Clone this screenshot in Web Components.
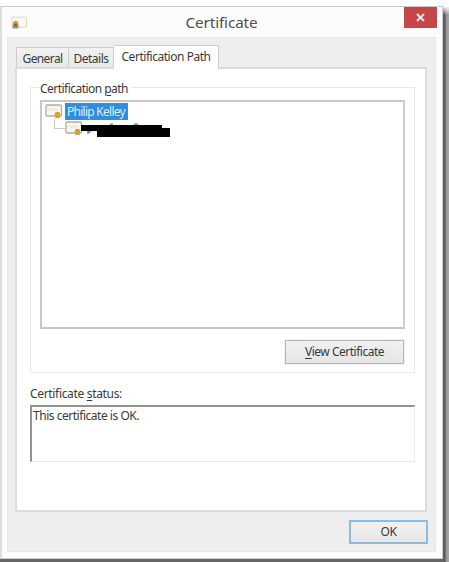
<!DOCTYPE html>
<html lang="en"><head><meta charset="utf-8"><title>Certificate</title>
<style>
html,body{margin:0;height:100%;background:#fff;overflow:hidden}
body{font:12px/16px "Noto Sans","Open Sans",sans-serif;color:#3a3a3a}
</style></head><body>
<cert-dialog></cert-dialog>
<script>
const define=(name,html,ready)=>customElements.define(name,class extends HTMLElement{
  constructor(){super();this.attachShadow({mode:'open'}).innerHTML=html;}
  connectedCallback(){if(ready)ready(this);}
});

// Label whose tracking is adjusted so that it spans the width in its "w" attribute.
define('ui-label',`<style>:host{display:inline-block;white-space:nowrap}span{display:inline-block}::slotted(u){text-underline-offset:2px;text-decoration-thickness:1px}</style><span><slot></slot></span>`,el=>{
  const w=+el.getAttribute('w'),s=el.shadowRoot.querySelector('span'),n=el.textContent.length;
  el.style.width=w+'px';
  s.style.letterSpacing=((w-s.getBoundingClientRect().width)/n)+'px';
});

define('cert-icon',`<style>:host{display:block;width:18px;height:15px}svg{display:block}</style>
<svg width="18" height="15" viewBox="0 0 18 15"><rect x="1" y="1" width="15.5" height="11" rx="1" fill="#f7f5f0" stroke="#b9ad94" stroke-width="1.3"/><path d="M4 4.5l3 2 2-1.5 4 1" fill="none" stroke="#ddd9d3"/><path d="M10.5 11v3.5l2-1 2 1V11" fill="#8d8590"/><circle cx="12.5" cy="10.5" r="2.8" fill="#dba520"/></svg>`);

define('title-icon',`<style>:host{display:block;width:17px;height:14px}svg{display:block}</style>
<svg width="17" height="14" viewBox="0 0 17 14"><rect x="1" y="1.2" width="14.5" height="10" rx="1" fill="#fbf9f5" stroke="#e5dcae"/><path d="M1.5 9h6v3.5h-6z" fill="#8a91a8"/><path d="M1.5 9.8l.9-4 2.2-1.2 2.2 1.2.9 4z" fill="#d9a116"/><circle cx="4.6" cy="9" r="1.6" fill="#876330"/></svg>`);

define('ui-button',`<style>:host{display:flex;align-items:center;justify-content:center;box-sizing:border-box;height:24px;border:1px solid #b5b5b5;background:linear-gradient(#f1f1f1,#e5e5e5);box-shadow:0 0 1px #aaa}
:host([primary]){border:2px solid #8dbbe6;box-shadow:none;background:linear-gradient(#f0f0f0,#e7e7e7)}</style><slot></slot>`);

define('close-button',`<style>:host{display:grid;place-items:center;width:33px;height:21px;background:#c84648}svg{display:block}</style>
<svg width="9" height="9" viewBox="0 0 9 9"><path d="M1 1l7 7M8 1L1 8" stroke="#f8e6e6" stroke-width="2"/></svg>`);

define('title-bar',`<style>:host{display:grid;grid-template-columns:33px 1fr 33px;height:30px;padding:0 5px 0 9px;color:#505050;font-size:15.3px;line-height:20px}
title-icon{margin-top:9px}ui-label{justify-self:center;margin:5px 5px 0 0}</style>
<title-icon></title-icon><ui-label w="72">Certificate</ui-label><close-button></close-button>`);

define('ui-tab',`<style>:host{display:flex;align-items:center;justify-content:center;box-sizing:border-box;height:20px;border:1px solid #cdcdcd;border-width:1px 1px 0 0;background:linear-gradient(#f1f1f1,#e9e9e9);padding-top:2px}
:host([first]){border-left-width:1px}
:host([active]){height:24px;background:#fff;margin-bottom:-2px;padding-bottom:2px;padding-top:0;position:relative;z-index:1}</style><slot></slot>`);

define('tab-strip',`<style>:host{display:flex;align-items:flex-end;height:22px;padding-left:1px}</style>
<ui-tab first style="width:53px"><ui-label w="40">General</ui-label></ui-tab>
<ui-tab style="width:45px"><ui-label w="35">Details</ui-label></ui-tab>
<ui-tab active style="width:105px"><ui-label w="89">Certification Path</ui-label></ui-tab>`);

define('cert-tree',`<style>:host{display:block;box-sizing:border-box;height:229px;border:2px solid #c8c8cc;border-right-color:#cfcfd2;background:#fff;padding:1px 0 0 3px}
.row{display:flex;height:17px}
.sel{box-sizing:border-box;height:17px;width:63px;margin-left:2px;padding:0 0 0 1px;line-height:15px;border:1px solid #8b7b62;background:#318ddd;color:#d7eefc}
.child{padding-left:9px}.elbow{width:10px;height:9px;border:1px solid #ccc;border-width:0 0 1px 1px;margin-top:-1px}
.child cert-icon{margin-top:1px}
.mask{display:block;margin-left:-3px;margin-top:2px}cert-icon{margin-top:1px}</style>
<div class="row"><cert-icon></cert-icon><div class="sel"><ui-label w="58">Philip Kelley</ui-label></div></div>
<div class="row child"><div class="elbow"></div><cert-icon></cert-icon>
<svg class="mask" width="91" height="16" viewBox="0 0 91 16"><path d="M8 7v5M8 8q5-1 3.5 1t-3.5 1" fill="none" stroke="#555"/><path d="M30 2.5h3M54 2.5h4" stroke="#888" stroke-width="2"/><path d="M1 3h81v3h8v9H17V9H1z" fill="#000"/></svg></div>`);

define('path-group',`<style>:host{display:block;box-sizing:border-box;height:286px;border:1px solid #e9e9e9;padding:0 9px;margin-right:1px}
.legend{display:block;width:91px;background:#fff;margin:-7px 0 3px -1px;padding-left:1px;height:16px}
ui-button{width:119px;margin:11px 1px 0 auto}</style>
<div class="legend"><ui-label w="88">Certification <u>p</u>ath</ui-label></div>
<cert-tree></cert-tree><ui-button><ui-label w="79"><u>V</u>iew Certificate</ui-label></ui-button>`);

define('status-box',`<style>:host{display:block;box-sizing:border-box;height:57px;border:2px solid #929292;border-right:1px solid #ebebeb;border-bottom:1px solid #e6e6e6;padding:1px 0 0 1px;margin-right:1px}</style><slot></slot>`);

define('tab-page',`<style>:host{display:block;box-sizing:border-box;height:445px;border:2px solid #dcdcdc;background:#fff;padding:18px 9px 0 13px}
.caption{display:block;height:16px;margin:13px 0 3px}</style>
<path-group></path-group><div class="caption"><ui-label w="92">Certificate <u>s</u>tatus:</ui-label></div>
<status-box><ui-label w="106">This certificate is OK.</ui-label></status-box>`);

define('cert-dialog',`<style>:host{display:block;box-sizing:border-box;width:449px;height:562px;padding-top:6px;background:#fff}
.shadow{display:block;box-sizing:border-box;width:449px;height:556px;padding:0 6px 3px 0;background:linear-gradient(#fff,rgba(255,255,255,0) 9px),linear-gradient(90deg,#666 0,#666 443px,#555 445px,#929292 446px,#a6a6a6 449px)}
.win{box-sizing:border-box;width:443px;height:553px;border:1px solid #c9c9c9;border-left:2px solid #ddd;background:#fcfcfc}
.client{box-sizing:border-box;margin:0 6px 0 5px;height:515px;border:1px solid #e7e7e7;background:#eee;padding:7px 8px 0 7px}
.actions{display:flex;justify-content:flex-end;padding-top:8px}.actions ui-button{width:79px;margin-right:-1px}</style>
<div class="shadow"><div class="win"><title-bar></title-bar><div class="client">
<tab-strip></tab-strip><tab-page></tab-page><div class="actions"><ui-button primary><ui-label w="16">OK</ui-label></ui-button></div></div></div></div>`);
</script></body></html>
